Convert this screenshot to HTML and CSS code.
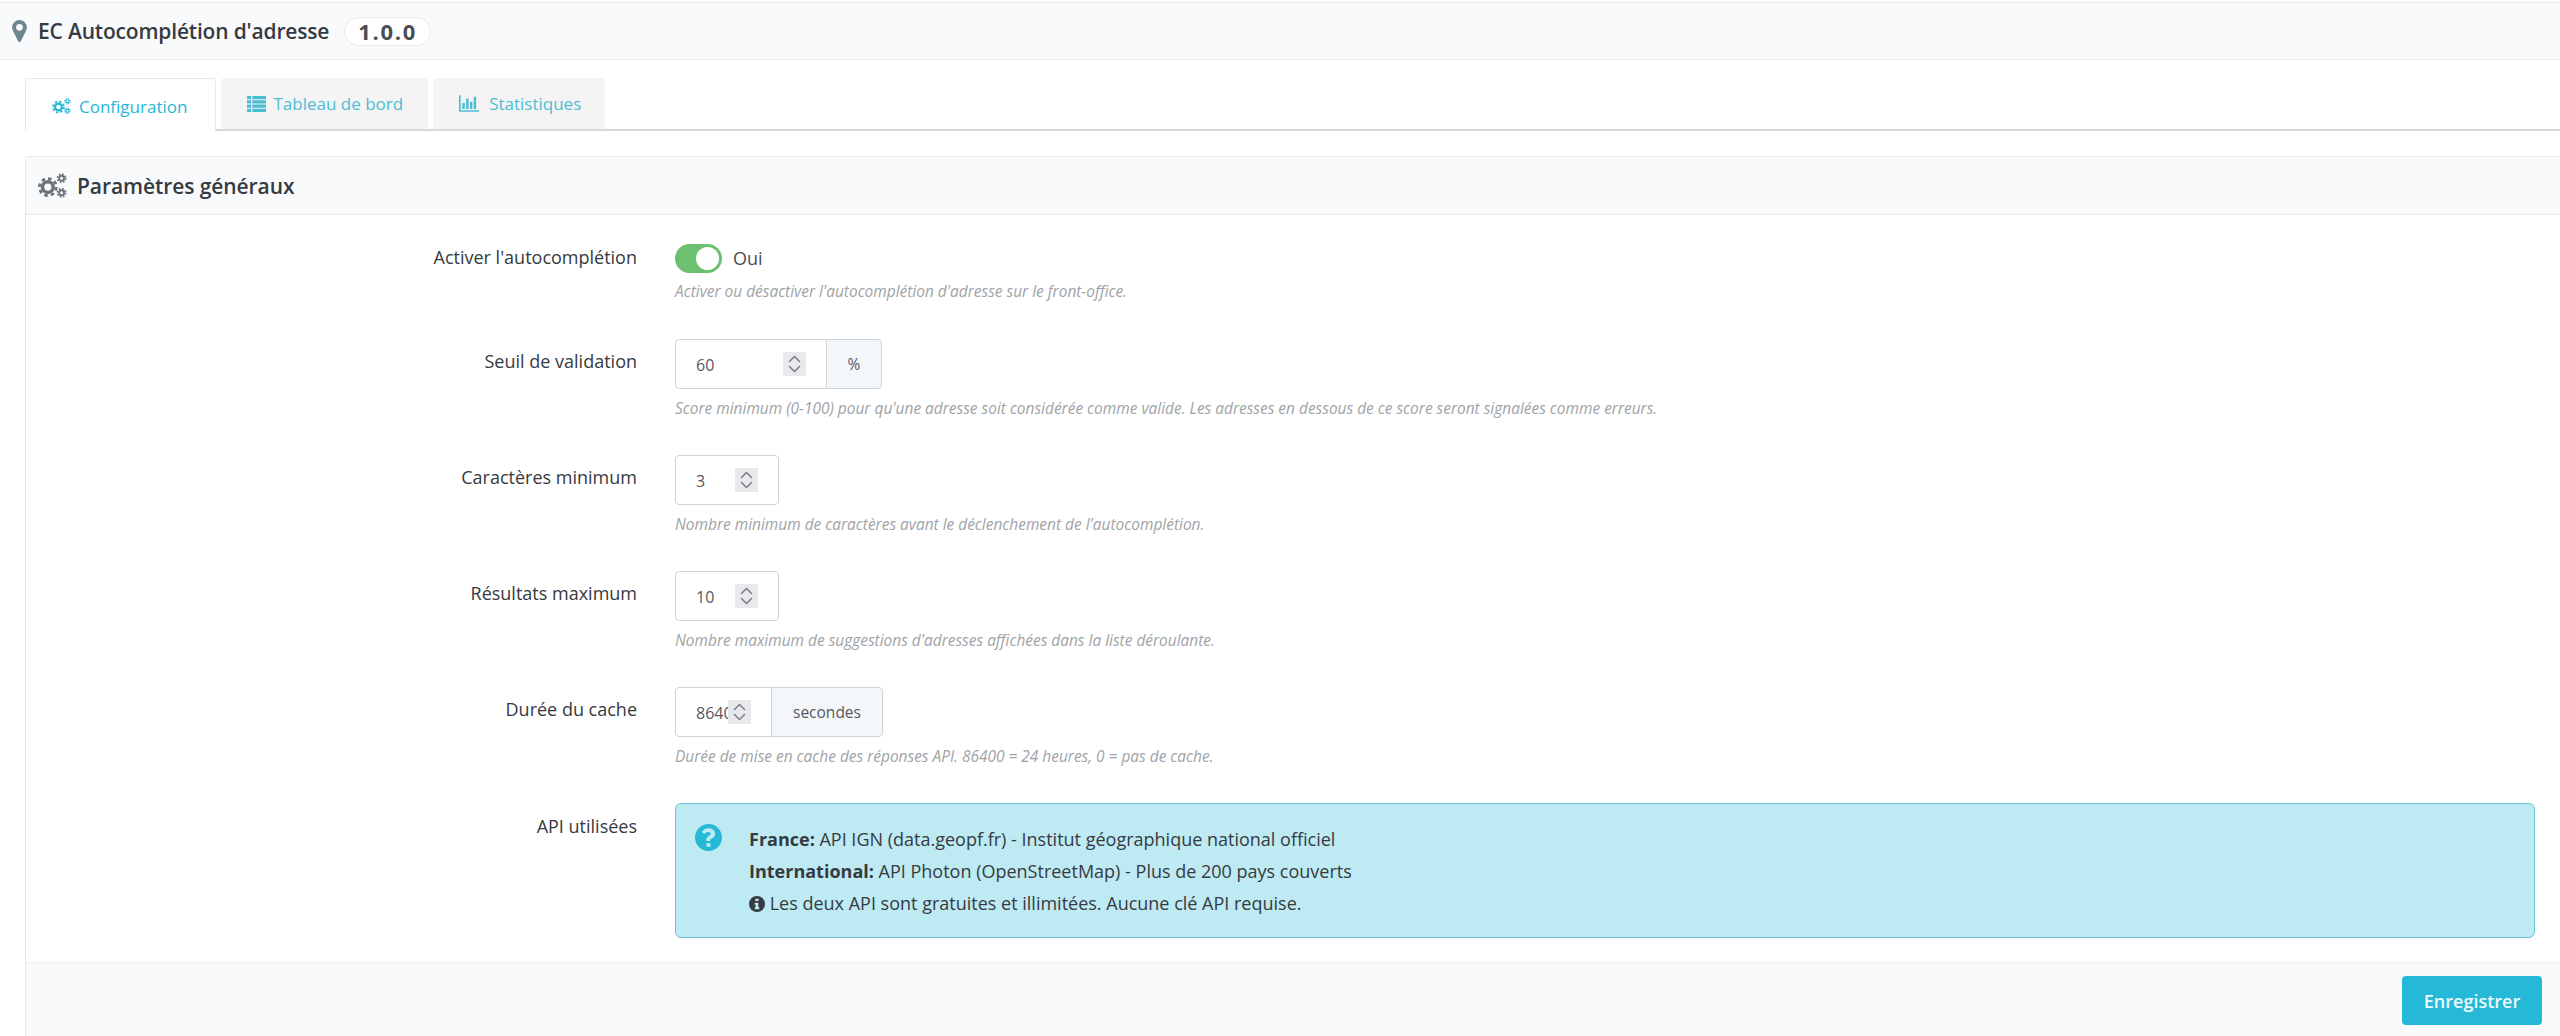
FILE: index.html
```html
<!DOCTYPE html>
<html lang="fr">
<head>
<meta charset="utf-8">
<title>EC Autocomplétion d'adresse</title>
<link rel="stylesheet" href="styles.css">
</head>
<body>
<svg class="defs" width="0" height="0" aria-hidden="true">
  <defs>
    <symbol id="cogs" viewBox="0 0 28 24">
      <circle cx="9.500" cy="13.500" r="5.200" fill="none" stroke="currentColor" stroke-width="3.400"/>
      <circle cx="9.500" cy="13.500" r="8.200" fill="none" stroke="currentColor" stroke-width="2.600" stroke-dasharray="3.400 3.040"/>
      <circle cx="22.800" cy="5" r="2.400" fill="none" stroke="currentColor" stroke-width="1.800"/>
      <circle cx="22.800" cy="5" r="4" fill="none" stroke="currentColor" stroke-width="1.600" stroke-dasharray="1.600 1.540"/>
      <circle cx="22.800" cy="19" r="2.400" fill="none" stroke="currentColor" stroke-width="1.800"/>
      <circle cx="22.800" cy="19" r="4" fill="none" stroke="currentColor" stroke-width="1.600" stroke-dasharray="1.600 1.540"/>
    </symbol>
    <symbol id="spin" viewBox="0 0 22 24">
      <path d="M6 9.500 11 4.500 16 9.500M6 14.500 11 19.500 16 14.500" fill="none" stroke="#7a7d83" stroke-width="1.500" stroke-linecap="round" stroke-linejoin="round"/>
    </symbol>
  </defs>
</svg>
<header class="page-head">
  <svg class="pin" viewBox="0 0 16 24"><path fill-rule="evenodd" d="M8 0a8 8 0 0 0-8 8c0 1.800.3 2.700 1 4.100L6.400 23a1.800 1.800 0 0 0 3.200 0L15 12.100c.7-1.400 1-2.300 1-4.100a8 8 0 0 0-8-8Zm0 11.700a3.700 3.700 0 1 1 0-7.400 3.700 3.700 0 0 1 0 7.400Z"/></svg>
  <h1 class="page-title">EC Autocomplétion d'adresse</h1>
  <span class="version">1.0.0</span>
</header>
<main class="content">
  <nav class="tabs">
    <a class="tab tab-active"><svg class="tab-ico"><use href="#cogs"/></svg>Configuration</a>
    <a class="tab">
      <svg class="tab-ico tab-ico-list" viewBox="0 0 18 15"><path fill="currentColor" d="M0 0h4v3H0zM5 0h13v3H5zM0 4h4v3H0zM5 4h13v3H5zM0 8h4v3H0zM5 8h13v3H5zM0 12h4v3H0zM5 12h13v3H5z"/></svg>Tableau de bord</a>
    <a class="tab tab-stats">
      <svg class="tab-ico tab-ico-wide" viewBox="0 0 18 15"><path fill="currentColor" d="M0 0h1.500v13.500H18V15H0zM3 7h2.200v5.500H3zM6.400 3h2.200v9.500H6.400zM9.800 6h2.200v6.500H9.800zM13.200 1.500h2.200v11h-2.200z"/></svg>Statistiques</a>
  </nav>
  <section class="panel">
    <div class="panel-head">
      <svg class="panel-ico"><use href="#cogs"/></svg>
      <h2 class="panel-title">Paramètres généraux</h2>
    </div>
    <div class="panel-body">
      <div class="row row-switch">
        <div class="label">Activer l'autocomplétion</div>
        <div class="field">
          <div class="switch-line"><span class="switch"><span class="knob"></span></span><span class="switch-text">Oui</span></div>
          <p class="help help-switch">Activer ou désactiver l'autocomplétion d'adresse sur le front-office.</p>
        </div>
      </div>
      <div class="row">
        <div class="label">Seuil de validation</div>
        <div class="field">
          <div class="input-group">
            <div class="num num-wide"><span class="val">60</span><span class="spinner"><svg class="spin-ico"><use href="#spin"/></svg></span></div>
            <span class="addon addon-pct">%</span>
          </div>
          <p class="help">Score minimum (0-100) pour qu'une adresse soit considérée comme valide. Les adresses en dessous de ce score seront signalées comme erreurs.</p>
        </div>
      </div>
      <div class="row">
        <div class="label">Caractères minimum</div>
        <div class="field">
          <div class="input-group">
            <div class="num num-small"><span class="val">3</span><span class="spinner"><svg class="spin-ico"><use href="#spin"/></svg></span></div>
          </div>
          <p class="help">Nombre minimum de caractères avant le déclenchement de l'autocomplétion.</p>
        </div>
      </div>
      <div class="row">
        <div class="label">Résultats maximum</div>
        <div class="field">
          <div class="input-group">
            <div class="num num-small"><span class="val">10</span><span class="spinner"><svg class="spin-ico"><use href="#spin"/></svg></span></div>
          </div>
          <p class="help">Nombre maximum de suggestions d'adresses affichées dans la liste déroulante.</p>
        </div>
      </div>
      <div class="row">
        <div class="label">Durée du cache</div>
        <div class="field">
          <div class="input-group">
            <div class="num num-cache"><span class="val val-clip">86400</span><span class="spinner spinner-tight"><svg class="spin-ico"><use href="#spin"/></svg></span></div>
            <span class="addon addon-sec">secondes</span>
          </div>
          <p class="help">Durée de mise en cache des réponses API. 86400 = 24 heures, 0 = pas de cache.</p>
        </div>
      </div>
      <div class="row row-info">
        <div class="label label-info">API utilisées</div>
        <div class="field">
          <div class="info">
            <svg class="info-ico" viewBox="0 0 24 24"><path fill-rule="evenodd" fill="#25b9d7" d="M12 0a12 12 0 1 1 0 24 12 12 0 0 1 0-24Zm-1.800 17v3.300h3.500V17Zm1.900-13.200c-3 0-4.900 1.300-6 3.300l2.300 1.700c.8-1.100 1.800-1.800 3.300-1.800 1.300 0 2.300.6 2.300 1.700 0 1-.8 1.500-2 2.100-1.400.7-2 1.700-2 3.300v1h3.500v-.6c0-.8.400-1.200 1.400-1.700 1.700-.9 3-2 3-4.200 0-3-2.900-4.800-6.100-4.800Z"/></svg>
            <div class="info-text">
              <p class="info-line"><strong>France:</strong> API IGN (data.geopf.fr) - Institut géographique national officiel</p>
              <p class="info-line"><strong>International:</strong> API Photon (OpenStreetMap) - Plus de 200 pays couverts</p>
              <p class="info-line"><svg class="info-mini" viewBox="0 0 24 24"><path fill-rule="evenodd" fill="currentColor" d="M12 0a12 12 0 1 1 0 24 12 12 0 0 1 0-24ZM9.500 4v3.500h5V4Zm-1 6v3h1.500v4H8.500v3h7v-3H14v-7Z"/></svg> Les deux API sont gratuites et illimitées. Aucune clé API requise.</p>
            </div>
          </div>
        </div>
      </div>
    </div>
    <div class="panel-foot">
      <button class="save" type="button">Enregistrer</button>
    </div>
  </section>
</main>
</body>
</html>
```
FILE: styles.css
```css
* { box-sizing: border-box; }
html, body { margin: 0; padding: 0; height: 100%; }
body {
  font-family: "Open Sans", "Noto Sans", sans-serif;
  color: #363a41;
  background: #fff;
  overflow: hidden;
}
p, h1, h2 { margin: 0; font-weight: inherit; }
.defs { position: absolute; }

.page-head {
  display: flex;
  align-items: center;
  height: 58px;
  margin-top: 2px;
  padding-left: 12px;
  background: #f8fafc;
  border-top: 1px solid #e8ecef;
  border-bottom: 1px solid #e8ecef;
}
.pin { width: 15px; height: 22px; fill: #6c868e; margin-right: 11px; flex: none; }
.page-title { font-size: 21px; font-weight: 600; letter-spacing: -0.180px; color: #363a41; white-space: nowrap; }
.version {
  margin-left: 15px;
  padding: 0 13px;
  height: 29px;
  line-height: 26px;
  border: 1px solid #e6e9ec;
  border-radius: 15px;
  background: #fff;
  font-size: 22px;
  font-weight: 700;
  letter-spacing: 1.700px;
  color: #4a4d52;
}

.content { padding: 18px 0 0 25px; }
.tabs {
  display: flex;
  align-items: flex-end;
  gap: 5px;
  height: 53px;
  border-bottom: 2px solid #d6d9dc;
}
.tab {
  display: flex;
  align-items: center;
  height: 51px;
  padding: 0 25px 0 26px;
  background: #f4f4f4;
  color: #4cbdd4;
  font-size: 17px;
  border-radius: 4px 4px 0 0;
}
.tab-active {
  height: 53px;
  margin-bottom: -2px;
  padding: 2px 28px 0 26px;
  background: #fff;
  border: 1px solid #e6e9ec;
  border-bottom: 0;
  color: #25b9d7;
  font-weight: 500;
}
.tab-stats { padding-right: 24px; }
.tab-ico { width: 19px; height: 16px; margin-right: 8px; flex: none; }
.tab-ico-list { margin-right: 7px; }
.tab-ico-wide { width: 20px; height: 17px; margin-right: 10px; }

.panel {
  margin-top: 25px;
  border: 1px solid #e6e9ec;
  border-right: 0;
  border-bottom: 0;
  border-radius: 4px 0 0 0;
  background: #fff;
}
.panel-head {
  display: flex;
  align-items: center;
  height: 58px;
  padding-left: 12px;
  background: #f8fafc;
  border-bottom: 1px solid #e6e9ec;
}
.panel-ico { width: 29px; height: 25px; color: #6c7378; margin-right: 10px; flex: none; }
.panel-title { font-size: 21px; font-weight: 600; letter-spacing: -0.080px; color: #363a41; }

.panel-body { padding: 28px 25px 0 0; }
.row { display: flex; height: 116px; }
.row-switch { height: 96px; }
.row-info { height: 159px; }
.label {
  width: 611px;
  flex: none;
  padding-top: 10px;
  text-align: right;
  font-size: 18px;
  color: #363a41;
}
.row-switch .label { padding-top: 2px; }
.row-info .label-info { padding-top: 11px; }
.field { margin-left: 38px; flex: 1; min-width: 0; }

.switch-line { display: flex; align-items: center; height: 30px; }
.switch {
  display: block;
  position: relative;
  width: 47px;
  height: 29px;
  border-radius: 15px;
  background: #6cc070;
}
.knob {
  position: absolute;
  top: 3px;
  right: 3px;
  width: 23px;
  height: 23px;
  border-radius: 50%;
  background: #fff;
}
.switch-text { margin-left: 11px; font-size: 18px; color: #4a4d52; }
.help { margin-top: 9px; font-size: 15.450px; font-style: italic; color: #a0a3a6; line-height: 20px; white-space: nowrap; }
.help-switch { margin-top: 8px; }

.input-group { display: flex; height: 50px; }
.num {
  display: flex;
  align-items: center;
  height: 50px;
  padding-left: 20px;
  background: #fff;
  border: 1px solid #cfd4d8;
  border-radius: 4px;
  font-size: 16px;
  color: #55585d;
}
.num-wide { width: 152px; border-radius: 4px 0 0 4px; }
.num-small { width: 104px; }
.num-cache { width: 97px; border-radius: 4px 0 0 4px; }
.val { flex: 1; min-width: 0; padding-top: 2px; }
.val-clip { overflow: hidden; white-space: nowrap; flex: none; width: 32px; }
.spinner {
  display: flex;
  width: 23px;
  height: 24px;
  margin-right: 20px;
  background: #e8e9ec;
}
.spinner-tight { margin-right: 0; }
.spin-ico { width: 23px; height: 24px; }
.addon {
  display: flex;
  align-items: center;
  justify-content: center;
  height: 50px;
  margin-left: -1px;
  background: #f4f7f9;
  border: 1px solid #cfd4d8;
  border-radius: 0 4px 4px 0;
  font-size: 15.500px;
  color: #55585d;
}
.addon-pct { width: 56px; }
.addon-sec { width: 112px; }

.info {
  display: flex;
  height: 135px;
  padding: 19px 0 0 19px;
  background: #beeaf3;
  border: 1px solid #6cc5d6;
  border-radius: 6px;
  color: #363a41;
}
.info-ico { width: 27px; height: 27px; flex: none; margin-right: 27px; margin-top: 1px; }
.info-text { font-size: 18px; }
.info-line { line-height: 32px; white-space: nowrap; }
.info-line strong { font-weight: 700; }
.info-mini { width: 16px; height: 16px; vertical-align: -2px; }

.panel-foot {
  display: flex;
  justify-content: flex-end;
  height: 74px;
  padding: 13px 18px 0 0;
  background: #f8fafc;
  border-top: 1px solid #eef0f2;
}
.save {
  width: 140px;
  height: 49px;
  border: 0;
  border-radius: 4px;
  background: #25b9d7;
  color: #eefafd;
  font-family: inherit;
  font-size: 18px;
  font-weight: 600;
}
```
